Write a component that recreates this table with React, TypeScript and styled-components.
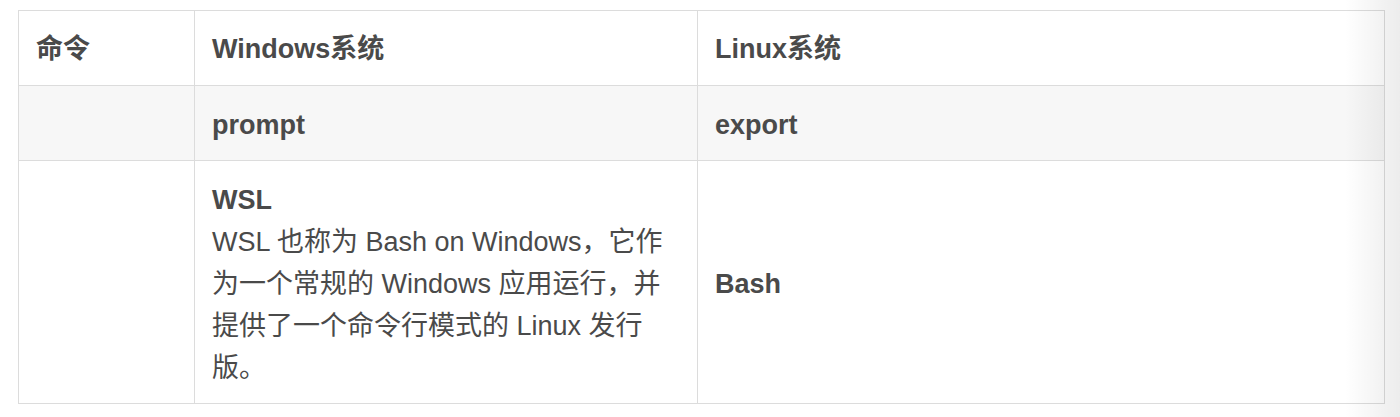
import styled, { createGlobalStyle } from 'styled-components'

const GlobalStyle = createGlobalStyle`
  body {
    margin: 0;
    background: #fff;
    font-family: "Liberation Sans", "Noto Sans CJK SC", sans-serif;
    color: #4a4a4a;
  }
`

const Page = styled.div`
  position: relative;
  height: 417px;
  overflow: hidden;
  padding: 10px 15px 0 18px;
  box-sizing: border-box;
`

// soft grey fade that lies over the right edge of the page
const EdgeFade = styled.div`
  position: absolute;
  top: 0;
  right: 0;
  bottom: 0;
  width: 55px;
  pointer-events: none;
  background: linear-gradient(to right, rgba(0, 0, 0, 0), rgba(0, 0, 0, 0.075));
`

const Table = styled.table`
  width: 1367px;
  border-collapse: collapse;
  table-layout: fixed;
  font-size: 27px;
  line-height: 42px;
`

const Row = styled.tr<{ $shaded?: boolean }>`
  background: ${(p) => (p.$shaded ? '#f7f7f7' : '#fff')};
`

const HeadCell = styled.th<{ $width?: number }>`
  box-sizing: border-box;
  width: ${(p) => (p.$width ? `${p.$width}px` : 'auto')};
  border: 1px solid #dcdcdc;
  padding: 17px 17px 15px;
  text-align: left;
  vertical-align: middle;
  font-weight: 700;
`

const Cell = styled.td`
  border: 1px solid #dcdcdc;
  padding: 18px 17px 14px;
  vertical-align: middle;
`

const Strong = styled.strong`
  font-weight: 700;
`

const App = () => {
  return (
    <Page>
      <GlobalStyle />
      <Table>
        <thead>
          <Row>
            <HeadCell $width={176}>命令</HeadCell>
            <HeadCell $width={503}>Windows系统</HeadCell>
            <HeadCell>Linux系统</HeadCell>
          </Row>
        </thead>
        <tbody>
          <Row $shaded>
            <Cell></Cell>
            <Cell>
              <Strong>prompt</Strong>
            </Cell>
            <Cell>
              <Strong>export</Strong>
            </Cell>
          </Row>
          <Row>
            <Cell></Cell>
            <Cell>
              <Strong>WSL</Strong>
              <br />
              WSL 也称为 Bash on Windows，它作为一个常规的 Windows 应用运行，并提供了一个命令行模式的 Linux 发行版。
            </Cell>
            <Cell>
              <Strong>Bash</Strong>
            </Cell>
          </Row>
        </tbody>
      </Table>
      <EdgeFade />
    </Page>
  )
}

export default App
